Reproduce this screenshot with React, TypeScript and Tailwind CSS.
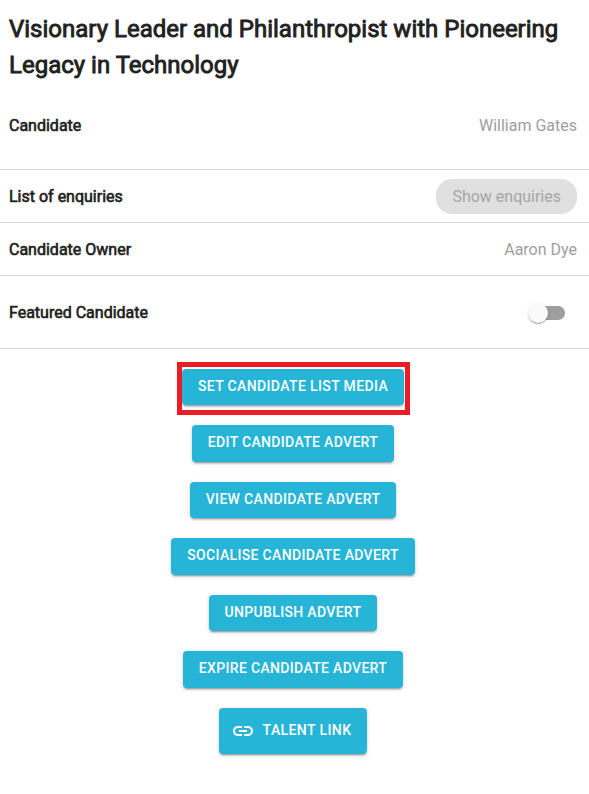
import type { ReactNode } from 'react';
import { MdLink } from 'react-icons/md';

function Row({ label, className, children }: { label: string; className: string; children: ReactNode }) {
  return (
    <div className={`flex items-center justify-between border-b border-[#d3d3d3] pl-[9px] pr-3 ${className}`}>
      <span className="text-base leading-6 text-[#212121] [-webkit-text-stroke:0.62px_#212121]">{label}</span>
      {children}
    </div>
  );
}

function ActionButton({ children, className = 'h-[36.5px] px-4' }: { children: ReactNode; className?: string }) {
  return (
    <button
      className={`flex items-center justify-center rounded bg-[#26b5d7] text-sm font-medium uppercase leading-[24.5px] text-white shadow-[0px_3px_1px_-2px_rgba(0,0,0,0.2),0px_2px_2px_0px_rgba(0,0,0,0.14),0px_1px_5px_0px_rgba(0,0,0,0.12)] ${className}`}
    >
      {children}
    </button>
  );
}

export default function App() {
  return (
    <div className="h-[794px] w-[589px] overflow-hidden bg-white font-['Roboto',sans-serif]">
      <h1 className="h-[82px] pl-[9px] pt-[11px] text-2xl leading-9 text-[#212121] [-webkit-text-stroke:0.86px_#212121]">
        Visionary Leader and Philanthropist with Pioneering
        <br />
        Legacy in Technology
      </h1>

      <Row label="Candidate" className="h-[88px]">
        <span className="text-[#9e9e9e]">William Gates</span>
      </Row>
      <Row label="List of enquiries" className="h-[53px] pt-px">
        <button className="h-[35px] rounded-2xl bg-[#e0e0e0] px-4 text-base text-[#a6a6a6]">Show enquiries</button>
      </Row>
      <Row label="Candidate Owner" className="h-[53px] pt-px">
        <span className="text-[#9e9e9e]">Aaron Dye</span>
      </Row>
      <Row label="Featured Candidate" className="h-[73px] pt-px">
        <button
          role="switch"
          aria-checked="false"
          aria-label="Featured Candidate"
          className="mr-3 flex h-[14px] w-[34px] items-center rounded-full bg-[#9e9e9e]"
        >
          <span className="-ml-[3px] size-5 rounded-full bg-[#fafafa] shadow-[0px_2px_1px_-1px_rgba(0,0,0,0.2),0px_1px_1px_0px_rgba(0,0,0,0.14),0px_1px_3px_0px_rgba(0,0,0,0.12)]" />
        </button>
      </Row>

      <div className="flex flex-col items-center gap-5 pr-[3px] pt-[19.7px] tracking-[0.33px]">
        <div className="relative">
          <ActionButton className="h-[36.5px] px-4 pb-[1.5px] tracking-[0.37px]">Set candidate list media</ActionButton>
          {/* highlight frame around the media button */}
          <div className="pointer-events-none absolute -top-[6.7px] left-1/2 -ml-[116px] h-[53px] w-[233px] border-[5px] border-[#ed1c24]" />
        </div>
        <ActionButton className="h-[36.5px] px-4 pb-[1.5px]">Edit candidate advert</ActionButton>
        <ActionButton className="h-[36.5px] px-4 pb-[1.5px]">View candidate advert</ActionButton>
        <ActionButton className="h-[36.5px] px-4 pb-[1.5px]">Socialise candidate advert</ActionButton>
        <ActionButton className="h-[36.5px] px-4 pb-[1.5px]">Unpublish advert</ActionButton>
        <ActionButton className="h-[36.5px] px-4 pb-[1.5px]">Expire candidate advert</ActionButton>
        <ActionButton className="h-[46px] gap-2 pl-3 pr-4 tracking-[0.4px]">
          <MdLink size={24} />
          <span className="pb-px">Talent link</span>
        </ActionButton>
      </div>
    </div>
  );
}
